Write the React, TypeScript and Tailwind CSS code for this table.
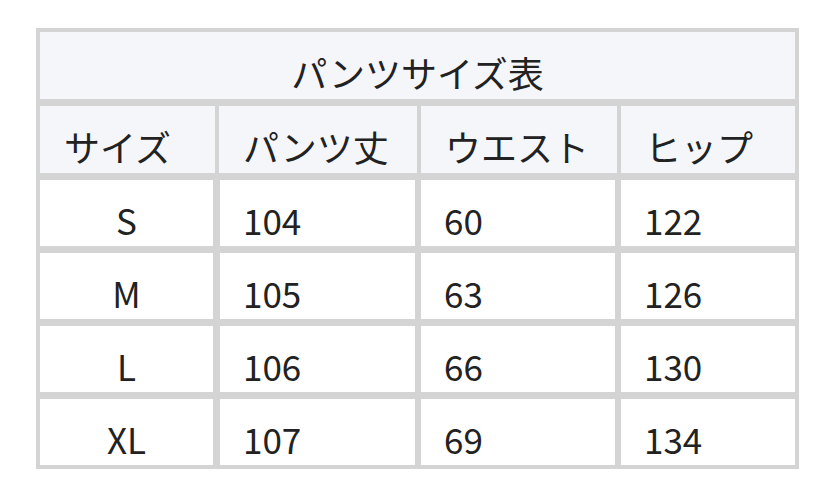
const rows = [
  { size: "S", length: "104", waist: "60", hip: "122" },
  { size: "M", length: "105", waist: "63", hip: "126" },
  { size: "L", length: "106", waist: "66", hip: "130" },
  { size: "XL", length: "107", waist: "69", hip: "134" },
];

const headers = ["サイズ", "パンツ丈", "ウエスト", "ヒップ"];
const headWidths = ["w-[175px]", "w-[198px]", "w-[196px]", "w-[174px]"];

export default function App() {
  return (
    <div
      className="min-h-screen bg-white pt-[28px] pl-[36px] text-[#222222]"
      style={{ fontFamily: '"Noto Sans CJK JP", "Noto Sans", sans-serif' }}
    >
      <div className="flex w-[763px] flex-col gap-[7px] bg-[#d4d4d4] p-[4px]">
        {/* タイトル */}
        <div className="h-[67px] bg-[#f5f6fa] pt-[22px] text-center text-[36px] leading-[36px]">
          パンツサイズ表
        </div>

        {/* 見出し */}
        <div className="flex h-[67px] gap-[4px]">
          {headers.map((h, i) => (
            <div
              key={h}
              className={`${headWidths[i]} bg-[#f5f6fa] pt-[22px] pl-[24px] text-[36px] leading-[36px]`}
            >
              {h}
            </div>
          ))}
        </div>

        {rows.map((r) => (
          <div key={r.size} className="flex h-[66px]">
            <div className="w-[173px] bg-white pt-[22px] text-center text-[35px] leading-[36px]">
              {r.size}
            </div>
            <div className="ml-[7px] w-[195px] bg-white pt-[22px] pl-[23px] text-[35px] leading-[36px]">
              {r.length}
            </div>
            <div className="ml-[6px] w-[194px] bg-white pt-[22px] pl-[23px] text-[35px] leading-[36px]">
              {r.waist}
            </div>
            <div className="ml-[6px] w-[174px] bg-white pt-[22px] pl-[23px] text-[35px] leading-[36px]">
              {r.hip}
            </div>
          </div>
        ))}
      </div>
    </div>
  );
}
